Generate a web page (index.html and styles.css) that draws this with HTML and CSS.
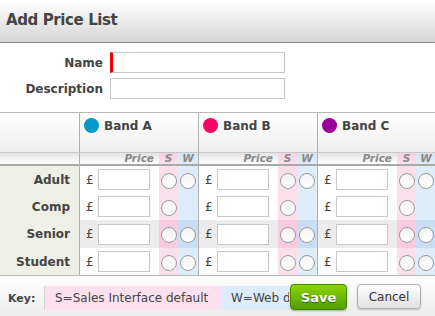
FILE: index.html
```html
<!DOCTYPE html>
<html>
<head>
<meta charset="utf-8">
<link rel="stylesheet" href="styles.css">
</head>
<body>
<div class="page">
  <div class="titlebar"><h1>Add Price List</h1></div>
  <div class="form">
    <div class="frow"><label>Name</label><span class="input req"></span></div>
    <div class="frow"><label>Description</label><span class="input"></span></div>
  </div>
  <table class="grid">
    <colgroup>
      <col class="c-label">
      <col class="c-price"><col class="c-s"><col class="c-w">
      <col class="c-price"><col class="c-s"><col class="c-w">
      <col class="c-price"><col class="c-s"><col class="c-w">
    </colgroup>
    <tr class="bandrow">
      <th></th>
      <th colspan="3" class="band"><span class="dot a"></span>Band A</th>
      <th colspan="3" class="band"><span class="dot b"></span>Band B</th>
      <th colspan="3" class="band"><span class="dot c"></span>Band C</th>
    </tr>
    <tr class="subrow">
      <th></th>
      <th class="ph first">Price</th><th class="sh">S</th><th class="wh">W</th>
      <th class="ph first">Price</th><th class="sh">S</th><th class="wh">W</th>
      <th class="ph first">Price</th><th class="sh">S</th><th class="wh">W</th>
    </tr>
    <tr class="drow">
      <th class="lbl">Adult</th>
      <td class="pc first"><span class="cur">£</span><span class="pin"></span></td><td class="s"><span class="rad"></span></td><td class="w"><span class="rad"></span></td>
      <td class="pc first"><span class="cur">£</span><span class="pin"></span></td><td class="s"><span class="rad"></span></td><td class="w"><span class="rad"></span></td>
      <td class="pc first"><span class="cur">£</span><span class="pin"></span></td><td class="s"><span class="rad"></span></td><td class="w"><span class="rad"></span></td>
    </tr>
    <tr class="drow">
      <th class="lbl">Comp</th>
      <td class="pc first"><span class="cur">£</span><span class="pin"></span></td><td class="s"><span class="rad"></span></td><td class="w"></td>
      <td class="pc first"><span class="cur">£</span><span class="pin"></span></td><td class="s"><span class="rad"></span></td><td class="w"></td>
      <td class="pc first"><span class="cur">£</span><span class="pin"></span></td><td class="s"><span class="rad"></span></td><td class="w"></td>
    </tr>
    <tr class="drow alt">
      <th class="lbl">Senior</th>
      <td class="pc first"><span class="cur">£</span><span class="pin"></span></td><td class="s"><span class="rad"></span></td><td class="w"><span class="rad"></span></td>
      <td class="pc first"><span class="cur">£</span><span class="pin"></span></td><td class="s"><span class="rad"></span></td><td class="w"><span class="rad"></span></td>
      <td class="pc first"><span class="cur">£</span><span class="pin"></span></td><td class="s"><span class="rad"></span></td><td class="w"><span class="rad"></span></td>
    </tr>
    <tr class="drow">
      <th class="lbl">Student</th>
      <td class="pc first"><span class="cur">£</span><span class="pin"></span></td><td class="s"><span class="rad"></span></td><td class="w"><span class="rad"></span></td>
      <td class="pc first"><span class="cur">£</span><span class="pin"></span></td><td class="s"><span class="rad"></span></td><td class="w"><span class="rad"></span></td>
      <td class="pc first"><span class="cur">£</span><span class="pin"></span></td><td class="s"><span class="rad"></span></td><td class="w"><span class="rad"></span></td>
    </tr>
  </table>
  <div class="footer">
    <span class="keylbl">Key:</span>
    <span class="key kpink">S=Sales Interface default</span>
    <span class="key kblue">W=Web default</span>
    <div class="buttons">
      <button class="btn save">Save</button>
      <button class="btn cancel">Cancel</button>
    </div>
  </div>
</div>
</body>
</html>
```

FILE: styles.css
```css
* { box-sizing: border-box; }
html, body { margin: 0; padding: 0; }
body {
  width: 435px;
  height: 316px;
  overflow: hidden;
  background: #fff;
  font-family: "DejaVu Sans", Verdana, sans-serif;
  color: #444;
}
.page { width: 435px; height: 316px; overflow: hidden; position: relative; }

.titlebar {
  height: 43px;
  background: linear-gradient(#ffffff, #d6d6d6);
  border-bottom: 1px solid #8a8a8a;
  padding: 11px 0 0 6px;
}
.titlebar h1 {
  margin: 0;
  font-size: 15px;
  letter-spacing: -0.4px;
  font-weight: bold;
  color: #444;
  line-height: 18px;
}

.form { padding: 9px 0 0 0; height: 69px; }
.frow { display: flex; align-items: center; gap: 7px; height: 21px; margin-bottom: 5px; }
.frow label {
  width: 103px;
  text-align: right;
  font-weight: bold;
  font-size: 12px;
  color: #444;
}
.input {
  width: 175px;
  height: 21px;
  border: 1px solid #c8c8c8;
  background: #fff;
}
.input.req { border-left: 3px solid #ee0000; }

.grid {
  border-collapse: separate;
  border-spacing: 0;
  table-layout: fixed;
  width: 436px;
  border-top: 1px solid #b8b8b8;
}
.c-label { width: 79px; }
.c-price { width: 80px; }
.c-s { width: 19px; }
.c-w { width: 20px; }

.grid th, .grid td { padding: 0; }
.first { border-left: 1px solid #b0b0b0; }
.bandrow th {
  height: 39px;
  background: linear-gradient(#ffffff, #efefef);
  vertical-align: top;
  text-align: left;
}
.bandrow th.band {
  border-left: 1px solid #b0b0b0;
  padding: 5px 0 0 4px;
  font-size: 12px;
  font-weight: bold;
  color: #444;
  white-space: nowrap;
}
.dot {
  display: inline-block;
  width: 15px;
  height: 15px;
  border-radius: 50%;
  vertical-align: -3px;
  margin-right: 5px;
}
.dot.a { background: #0099cc; }
.dot.b { background: #ff0066; }
.dot.c { background: #990099; }

.subrow th {
  height: 14px;
  background: linear-gradient(#e4e4e4, #ffffff);
  border-top: 1px solid #c8c8c8;
  border-bottom: 2px solid #a8a8a8;
  font-size: 10.5px;
  font-style: italic;
  font-weight: bold;
  color: #888;
  line-height: 11px;
}
.subrow th.ph { text-align: right; padding-right: 5px; }
.subrow th.sh { background: linear-gradient(#f4d2e2, #fbe0ec); text-align: center; }
.subrow th.wh { background: linear-gradient(#d5e3f2, #e0ecfa); text-align: center; }

.drow th.lbl {
  background: #eef0e6;
  text-align: right;
  padding-right: 9px;
  font-size: 12px;
  font-weight: bold;
  color: #444;
}
.drow td, .drow th { height: 27px; }
.drow.alt td, .drow.alt th, .drow:last-child td, .drow:last-child th { height: 28px; }
.drow:last-child td, .drow:last-child th { border-bottom: 1px solid #b8b8b8; }
.drow td.pc { padding-left: 6px; white-space: nowrap; }
.drow td.s { background: #fbe0ec; text-align: center; }
.drow td.w { background: #dfecfa; text-align: center; }
.drow.alt td.pc { background: #ececec; }
.drow.alt td.s { background: #f8cbe0; }
.drow.alt td.w { background: #c9def4; }

.cur {
  display: inline-block;
  width: 12px;
  font-size: 12px;
  color: #444;
  vertical-align: middle;
}
.pin {
  display: inline-block;
  width: 52px;
  height: 21px;
  border: 1px solid #c8c8c8;
  background: #fff;
  vertical-align: middle;
}
.rad {
  display: inline-block;
  width: 16px;
  height: 16px;
  border-radius: 50%;
  border: 1px solid #9a9a9a;
  background: linear-gradient(#f4f4f4, #ffffff);
  vertical-align: middle;
}

.footer {
  height: 40px;
  background: linear-gradient(#ffffff, #ececec);
  display: flex;
  align-items: flex-start;
  padding: 10px 0 0 8px;
  position: relative;
}
.keylbl {
  font-size: 11px;
  font-weight: bold;
  color: #444;
  width: 36px;
  padding-top: 6px;
}
.key {
  height: 24px;
  font-size: 12px;
  color: #444;
  padding: 5px 0 0 10px;
  white-space: nowrap;
  overflow: hidden;
}
.kpink { background: #fde0ee; border-left: 1px solid #d4d4d4; width: 177px; }
.kblue { background: #ddecfb; width: 68px; }
.buttons {
  position: absolute;
  left: 290px;
  top: 8px;
  display: flex;
  gap: 10px;
}
.btn {
  font-family: "DejaVu Sans", Verdana, sans-serif;
  border-radius: 4px;
  height: 26px;
  padding: 0;
}
.save {
  width: 57px;
  background: linear-gradient(#8fd400, #4f9e00);
  border: 1px solid #3f8500;
  color: #fff;
  font-weight: bold;
  font-size: 13px;
  text-shadow: 0 1px 1px #2d6000;
  box-shadow: 0 1px 2px rgba(0,0,0,0.3);
}
.cancel {
  width: 64px;
  height: 25px;
  background: linear-gradient(#ffffff, #e0e0e0);
  border: 1px solid #b0b0b0;
  color: #333;
  font-size: 12px;
  box-shadow: 0 1px 2px rgba(0,0,0,0.2);
}
```
